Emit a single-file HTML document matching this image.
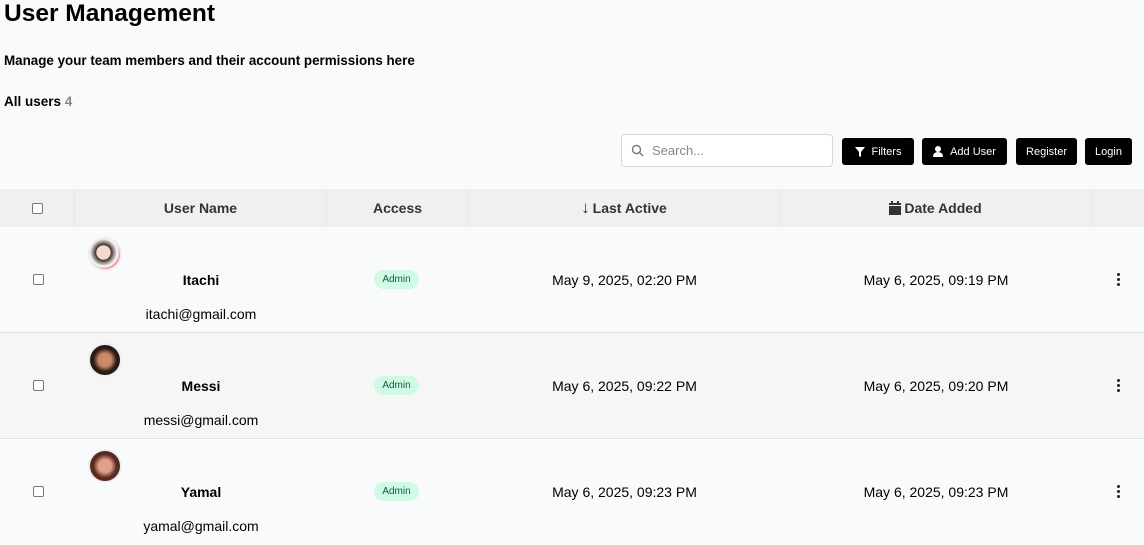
<!DOCTYPE html>
<html><head><style>
*{box-sizing:border-box;margin:0;padding:0}
body{width:1144px;height:543px;overflow:hidden;background:#f9fafb;font-family:"Liberation Sans",sans-serif;color:#000;position:relative}
.abs{position:absolute}
h1{position:absolute;left:4px;top:0;font-size:24.5px;font-weight:bold}
.sub{left:4px;top:53px;font-size:13.4px;font-weight:bold}
.all{left:4px;top:94px;font-size:13.5px;font-weight:bold}
.all span{color:#888}
.search{left:621px;top:134px;width:212px;height:33px;border:1px solid #d6d6d6;border-radius:4px;background:#fff;font-size:13px;color:#888;padding:8px 0 0 30px}
.btn{position:absolute;top:138px;height:27px;background:#000;color:#fff;border-radius:3px;font-size:11px;display:flex;align-items:center;justify-content:center;gap:7px}
.hdr{left:0;top:189px;width:1144px;height:38px;background:#f0f0f0}
.hc{position:absolute;top:0;height:38px;display:flex;align-items:center;justify-content:center;font-weight:bold;font-size:14px;color:#333;border-right:1px solid #e8e8e8}
.cb{position:absolute;width:11px;height:11px;border:1px solid #777;border-radius:2px;background:#fff}
.row{position:absolute;left:0;width:1144px;height:106px;border-bottom:1px solid #e3e3e3}
.av{position:absolute;left:88px;top:10px;width:34px;height:34px;border-radius:50%;border:2px solid #eee}
.name{position:absolute;left:75px;width:252px;text-align:center;top:45px;font-weight:bold;font-size:14px}
.mail{position:absolute;left:75px;width:252px;text-align:center;top:79px;font-size:14px}
.badge{position:absolute;left:374px;top:43px;width:45px;height:19px;border-radius:10px;background:#d1fae5;color:#065f46;font-size:10px;text-align:center;line-height:19px}
.d1{position:absolute;left:469px;width:311px;text-align:center;top:45px;font-size:14px}
.d2{position:absolute;left:780px;width:312px;text-align:center;top:45px;font-size:14px}
.dots{position:absolute;left:1117px;top:46px;width:3px}
.dots i{display:block;width:3px;height:3px;background:#222;border-radius:50%;margin-bottom:2px}
</style></head><body>
<h1>User Management</h1>
<div class="abs sub">Manage your team members and their account permissions here</div>
<div class="abs all">All users <span>4</span></div>
<div class="abs search">Search...
<svg class="abs" style="left:9px;top:9px" width="13" height="13" viewBox="0 0 13 13"><circle cx="5.5" cy="5.5" r="4" fill="none" stroke="#777" stroke-width="1.4"/><path d="M8.5 8.5L12 12" stroke="#777" stroke-width="1.4"/></svg></div>
<div class="btn" style="left:842px;width:72px"><svg width="10" height="10" viewBox="0 0 10 10"><path d="M0 0H10L6 5V10L4 9V5Z" fill="#fff"/></svg>Filters</div>
<div class="btn" style="left:922px;width:85px"><svg width="10" height="11" viewBox="0 0 10 11"><circle cx="5" cy="3" r="3" fill="#fff"/><path d="M0 11Q0 6 5 6Q10 6 10 11Z" fill="#fff"/></svg>Add User</div>
<div class="btn" style="left:1016px;width:61px">Register</div>
<div class="btn" style="left:1085px;width:47px">Login</div>
<div class="abs hdr">
<div class="hc" style="left:0;width:75px"><div class="cb" style="position:static"></div></div>
<div class="hc" style="left:75px;width:252px">User Name</div>
<div class="hc" style="left:327px;width:142px">Access</div>
<div class="hc" style="left:469px;width:311px"><span style="font-size:17px;margin-right:3px">↓</span>Last Active</div>
<div class="hc" style="left:780px;width:312px"><svg width="12" height="14" viewBox="0 0 12 14" style="margin-right:3px"><rect x="0" y="2" width="12" height="12" fill="#333"/><rect x="2" y="0" width="2" height="3" fill="#333"/><rect x="8" y="0" width="2" height="3" fill="#333"/><rect x="0" y="4" width="12" height="1" fill="#f0f0f0"/></svg>Date Added</div>
</div>
<div class="row" style="top:227px">
<div class="cb" style="left:33px;top:47px"></div>
<div class="av" style="background:radial-gradient(circle at 45% 45%,#f2d9cc 30%,#3a2a26 32%,#fff 60%,#d33 80%)"></div>
<div class="name">Itachi</div><div class="mail">itachi@gmail.com</div>
<div class="badge">Admin</div>
<div class="d1">May 9, 2025, 02:20 PM</div><div class="d2">May 6, 2025, 09:19 PM</div>
<div class="dots"><i></i><i></i><i></i></div></div>
<div class="row" style="top:333px;background:#f6f6f6">
<div class="cb" style="left:33px;top:47px"></div>
<div class="av" style="background:radial-gradient(circle at 50% 50%,#c98a6a 30%,#2b1b14 55%)"></div>
<div class="name">Messi</div><div class="mail">messi@gmail.com</div>
<div class="badge">Admin</div>
<div class="d1">May 6, 2025, 09:22 PM</div><div class="d2">May 6, 2025, 09:20 PM</div>
<div class="dots"><i></i><i></i><i></i></div></div>
<div class="row" style="top:439px;border:none">
<div class="cb" style="left:33px;top:47px"></div>
<div class="av" style="background:radial-gradient(circle at 50% 50%,#e0a08a 30%,#5a2a22 55%)"></div>
<div class="name">Yamal</div><div class="mail">yamal@gmail.com</div>
<div class="badge">Admin</div>
<div class="d1">May 6, 2025, 09:23 PM</div><div class="d2">May 6, 2025, 09:23 PM</div>
<div class="dots"><i></i><i></i><i></i></div></div>
</body></html>
